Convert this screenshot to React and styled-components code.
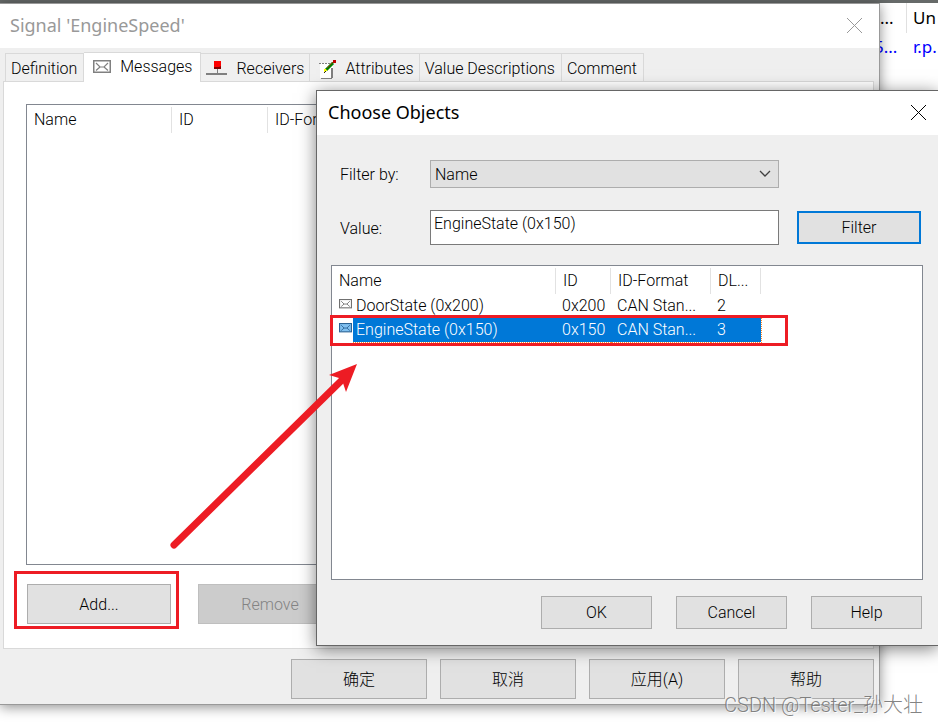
import React, { useState } from 'react';
import styled, { createGlobalStyle, css } from 'styled-components';

const objects = [
  { name: 'DoorState (0x200)', id: '0x200', format: 'CAN Stan...', dlc: '2' },
  { name: 'EngineState (0x150)', id: '0x150', format: 'CAN Stan...', dlc: '3' },
];

const CloseIcon = () => (
  <svg width="17" height="17" viewBox="0 0 17 17" fill="none" stroke="currentColor">
    <path d="M1 1L16 16M16 1L1 16" />
  </svg>
);

const EnvelopeIcon = ({ width = 18, fill = '#fff', stroke = '#808080' }) => (
  <svg width={width} height={(width * 13) / 18} viewBox="0 0 18 13" fill="none" stroke={stroke}>
    <rect x="0.75" y="0.75" width="16.5" height="11.5" fill={fill} strokeWidth="1.5" />
    <path d="M3 3L7 7H11L15 3M3 10.5L7 7M11 7L15 10.5" strokeWidth="1.2" />
  </svg>
);

const NodeIcon = () => (
  <svg width="21" height="17" viewBox="0 0 21 17">
    <path d="M0 12H21V14H0Z" fill="#808080" />
    <path d="M11 8H12V12H11Z" fill="#808080" />
    <path d="M8 0H15V8H8Z" fill="#800000" />
    <path d="M8 0H15V5L13 6H8Z" fill="#f00" />
  </svg>
);

const NoteIcon = () => (
  <svg width="21" height="19" viewBox="-4 0 21 19" fill="none">
    <path d="M1 3H14V18H1Z" fill="#fff" />
    <path d="M0 3.5H12" stroke="#808080" strokeDasharray="2 1" />
    <path d="M2 18.5H13" stroke="#808080" />
    <path d="M13 8V18" stroke="#808080" strokeWidth="2" />
    <path d="M7 10L14 3" stroke="#008000" strokeWidth="3" />
    <path d="M8 8L14 2" stroke="#804000" />
    <path d="M5 9H7L8 11L5 12Z" fill="#ff0" />
    <path d="M5 13L7 11" stroke="#222" />
    <path d="M14 0H17V3H14Z" fill="#c00000" />
  </svg>
);

const ChevronIcon = () => (
  <svg width="12" height="8" viewBox="0 0 12 8" fill="none" stroke="#404040">
    <path d="M1 1L6 6L11 1" strokeWidth="1.3" />
  </svg>
);

const App = () => {
  const [filterBy, setFilterBy] = useState('Name');
  const [value, setValue] = useState('EngineState (0x150)');
  const [selected, setSelected] = useState(1);

  return (
    <Desktop>
      <GlobalStyle />
      <Background>
        <BackColumn>
          <BackHeader>...</BackHeader>
          <BackValue>5...</BackValue>
        </BackColumn>
        <BackColumn $divided>
          <BackHeader $divided>Un</BackHeader>
          <BackValue>r.p.</BackValue>
        </BackColumn>
      </Background>

      <SignalWindow>
        <TitleBar $inactive>
          <Title>Signal 'EngineSpeed'</Title>
          <CloseButton type="button" aria-label="Close"><CloseIcon /></CloseButton>
        </TitleBar>
        <Tabs role="tablist">
          <Tab type="button" role="tab">Definition</Tab>
          <Tab type="button" role="tab" aria-selected="true" $active><EnvelopeIcon />Messages</Tab>
          <Tab type="button" role="tab" $icon><NodeIcon />Receivers</Tab>
          <Tab type="button" role="tab" $icon><NoteIcon />Attributes</Tab>
          <Tab type="button" role="tab">Value Descriptions</Tab>
          <Tab type="button" role="tab">Comment</Tab>
        </Tabs>
        <TabPanel>
          <MessageList>
            <ListTable>
              <colgroup>
                <col width="145" />
                <col width="96" />
                <col />
              </colgroup>
              <thead>
                <tr>
                  <HeadCell>Name</HeadCell>
                  <HeadCell>ID</HeadCell>
                  <HeadCell>ID-Format</HeadCell>
                </tr>
              </thead>
            </ListTable>
          </MessageList>
          <PanelButtons>
            <Button type="button">Add...</Button>
            <Button type="button" disabled>Remove</Button>
          </PanelButtons>
        </TabPanel>
        <SheetButtons>
          <Button type="button">确定</Button>
          <Button type="button">取消</Button>
          <Button type="button">应用(A)</Button>
          <Button type="button">帮助</Button>
        </SheetButtons>
      </SignalWindow>

      <Dialog role="dialog" aria-labelledby="dialog-title">
        <TitleBar>
          <Title id="dialog-title">Choose Objects</Title>
          <CloseButton type="button" aria-label="Close"><CloseIcon /></CloseButton>
        </TitleBar>
        <DialogBody>
          <FilterForm onSubmit={(e) => e.preventDefault()}>
            <Label htmlFor="filter-by">Filter by:</Label>
            <SelectWrapper>
              <Select id="filter-by" value={filterBy} onChange={(e) => setFilterBy(e.target.value)}>
                <option>Name</option>
                <option>ID</option>
              </Select>
              <ChevronIcon />
            </SelectWrapper>
            <span />
            <Label htmlFor="filter-value">Value:</Label>
            <Input
              id="filter-value"
              type="text"
              value={value}
              onChange={(e) => setValue(e.target.value)}
            />
            <FilterButton type="submit">Filter</FilterButton>
          </FilterForm>
          <ObjectList>
            <ListTable>
              <colgroup>
                <col width="21" />
                <col width="203" />
                <col width="55" />
                <col width="100" />
                <col width="50" />
                <col />
              </colgroup>
              <thead>
                <tr>
                  <HeadCell colSpan={2}>Name</HeadCell>
                  <HeadCell>ID</HeadCell>
                  <HeadCell>ID-Format</HeadCell>
                  <HeadCell>DL...</HeadCell>
                </tr>
              </thead>
              <tbody>
                {objects.map((obj, i) => (
                  <Row key={obj.name} $selected={i === selected} onClick={() => setSelected(i)}>
                    <IconCell>
                      <EnvelopeIcon
                        width={13}
                        fill={i === selected ? '#80c0f0' : '#fff'}
                        stroke={i === selected ? '#2a6294' : '#707070'}
                      />
                    </IconCell>
                    <Cell $first>{obj.name}</Cell>
                    <Cell>{obj.id}</Cell>
                    <Cell>{obj.format}</Cell>
                    <Cell>{obj.dlc}</Cell>
                  </Row>
                ))}
              </tbody>
            </ListTable>
          </ObjectList>
          <DialogButtons>
            <Button type="button">OK</Button>
            <Button type="button">Cancel</Button>
            <Button type="button">Help</Button>
          </DialogButtons>
        </DialogBody>
      </Dialog>

      <Annotations width="938" height="723" viewBox="0 0 938 723" aria-hidden="true">
        <rect x="15.5" y="572.5" width="162" height="55" />
        <rect x="331.5" y="316.5" width="455" height="28" />
        <path d="M174 545L342 380" strokeWidth="7" strokeLinecap="round" />
        <path d="M357 364L329 375L339 378L343 383L346 392Z" fill="#ed1c24" stroke="none" />
      </Annotations>
      <Watermark>CSDN @Tester_孙大壮</Watermark>
    </Desktop>
  );
};

const GlobalStyle = createGlobalStyle`
  * {
    box-sizing: border-box;
  }

  body {
    margin: 0;
    background: #fff;
    color: #000;
    font-family: Roboto, "Liberation Sans", "Noto Sans CJK SC", sans-serif;
    font-size: 16px;
    font-weight: 300;
    line-height: 20px;
  }

  button, input, select {
    font: inherit;
    color: inherit;
  }
`;

const Desktop = styled.main`
  position: relative;
  min-height: 100vh;
  overflow: hidden;
`;

const Background = styled.div`
  display: flex;
  justify-content: flex-end;
  border-top: 3px solid #666a69;
  font-family: "Noto Sans", sans-serif;
  font-size: 17px;
  font-weight: 400;
`;

const BackColumn = styled.div`
  width: 32px;
  padding-left: ${(props) => (props.$divided ? '7px' : '0')};
  white-space: nowrap;
`;

const BackHeader = styled.div`
  height: 30px;
  padding-top: 5px;
  padding-left: 6px;
  ${(props) => props.$divided && css`
    margin-left: -7px;
    border-left: 1px solid #e0e0e0;
  `}
`;

const BackValue = styled.div`
  padding-top: 4px;
  color: #00f;
`;

const SignalWindow = styled.section`
  position: absolute;
  top: 3px;
  left: 0;
  right: 58px;
  background: #efefef;
  border: 1px solid #999;
  border-left: none;
  box-shadow: 0 2px 12px rgba(0, 0, 0, 0.45);
`;

const Dialog = styled.section`
  position: absolute;
  top: 90px;
  left: 316px;
  right: 0;
  background: #efefef;
  border: 1px solid #666;
  border-right: none;
  box-shadow: 0 3px 16px rgba(0, 0, 0, 0.5);
`;

const TitleBar = styled.header`
  display: flex;
  align-items: center;
  justify-content: space-between;
  height: 44px;
  padding: 0 11px 2px;
  background: #fff;
  color: ${(props) => (props.$inactive ? '#999' : '#000')};
  ${(props) => props.$inactive && css`padding-right: 16px; padding-left: 10px;`}
`;

const Title = styled.h1`
  margin: 0;
  font-family: "Noto Sans", "Open Sans", sans-serif;
  font-size: 18px;
  font-weight: 400;
  line-height: 24px;
`;

const CloseButton = styled.button`
  display: flex;
  padding: 0;
  border: none;
  background: none;
`;

const Tabs = styled.div`
  display: flex;
  align-items: flex-end;
  padding: 4px 0 0 5px;
`;

const Tab = styled.button`
  display: flex;
  align-items: center;
  height: 28px;
  padding: 3px 6px 0 5px;
  border: 1px solid #d9d9d9;
  border-left-width: 0;
  border-bottom: none;
  background: #f0f0f0;
  white-space: nowrap;

  &:first-child {
    border-left-width: 1px;
  }

  ${(props) => props.$icon && css`
    gap: 9px;
    padding: 3px 5px 0;
  `}

  ${(props) => props.$active && css`
    position: relative;
    gap: 9px;
    height: 30px;
    margin-bottom: -1px;
    padding: 0 8px 2px 9px;
    background: #fff;
  `}
`;

const TabPanel = styled.div`
  margin: 0 5px 0 3px;
  padding: 22px;
  border: 1px solid #d9d9d9;
  background: #fff;
`;

const MessageList = styled.div`
  height: 461px;
  border: 1px solid #828790;
`;

const ObjectList = styled.div`
  height: 315px;
  border: 1px solid #828790;
  background: #fff;
`;

const ListTable = styled.table`
  width: 100%;
  table-layout: fixed;
  border-collapse: collapse;
`;

const HeadCell = styled.th`
  height: 28px;
  padding: 2px 0 0 7px;
  font-weight: 300;
  text-align: left;
  white-space: nowrap;
  background: linear-gradient(#e2e2e2, #e2e2e2) no-repeat 100% 2px / 1px 26px;
`;

const Cell = styled.td`
  height: 24px;
  padding: 0 0 0 ${(props) => (props.$first ? '3px' : '6px')};
  white-space: nowrap;
`;

const IconCell = styled.td`
  padding: 0 0 4px 7px;
  line-height: 0;
`;

const Row = styled.tr`
  ${(props) => props.$selected && css`
    color: #fff;

    ${Cell} {
      background: #0078d7;
      border-bottom: 1px dotted #ff8728;
    }

    ${Cell}:last-child {
      border-right: 1px dotted #ff8728;
    }
  `}
`;

const Button = styled.button`
  width: 136px;
  height: 40px;
  padding: 0;
  border: 1px solid #adadad;
  background: #e1e1e1;
  text-align: center;

  &:disabled {
    color: #838383;
    background: #ccc;
    border-color: #bfbfbf;
  }
`;

const PanelButtons = styled.div`
  display: flex;
  gap: 27px;
  padding: 19px 0 2px 1px;

  ${Button} {
    width: 144px;
    padding-top: 2px;
  }
`;

const SheetButtons = styled.div`
  display: flex;
  justify-content: flex-end;
  gap: 13px;
  padding: 10px 5px 5px;

  ${Button} {
    padding-top: 2px;
  }
`;

const DialogBody = styled.div`
  padding: 25px 15px 16px 14px;
`;

const FilterForm = styled.form`
  display: grid;
  grid-template-columns: 81px 1fr 124px;
  column-gap: 18px;
  row-gap: 22px;
  align-items: center;
  padding: 0 2px 20px 0;
`;

const Label = styled.label`
  padding: 2px 0 0 9px;
  white-space: nowrap;
`;

const SelectWrapper = styled.div`
  position: relative;

  svg {
    position: absolute;
    top: 10px;
    right: 8px;
    pointer-events: none;
  }
`;

const Select = styled.select`
  display: block;
  width: 100%;
  height: 28px;
  padding: 2px 4px 0;
  border: 1px solid #adadad;
  border-radius: 0;
  background: #e1e1e1;
  appearance: none;
`;

const Input = styled.input`
  width: 100%;
  height: 35px;
  padding: 0 3px 8px;
  border: 1px solid #7a7a7a;
  background: #fff;
`;

const FilterButton = styled(Button)`
  width: 100%;
  height: 33px;
  border: 2px solid #0078d7;
`;

const DialogButtons = styled.div`
  display: flex;
  justify-content: flex-end;
  gap: 24px;
  padding: 16px 1px 0 0;

  ${Button} {
    width: 111px;
    height: 33px;
  }
`;

const Annotations = styled.svg`
  position: absolute;
  top: 0;
  left: 0;
  fill: none;
  stroke: #ed1c24;
  stroke-width: 3px;
  pointer-events: none;
`;

const Watermark = styled.div`
  position: absolute;
  right: 15px;
  bottom: 6px;
  color: rgba(110, 110, 110, 0.85);
  font-size: 20px;
  line-height: 24px;
  text-shadow: 1px 1px 1px #fff;
`;

export default App;
